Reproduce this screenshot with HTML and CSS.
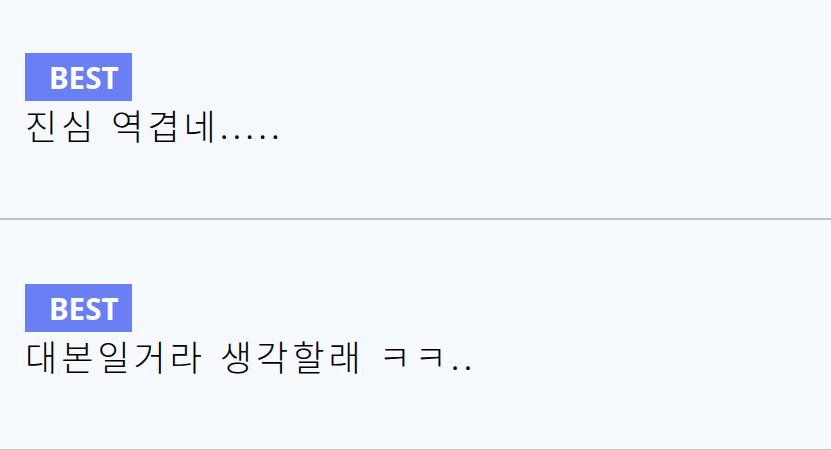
FILE: index.html
```html
<!DOCTYPE html>
<html lang="ko">
<head>
    <meta charset="UTF-8">
    <meta name="viewport" content="width=device-width, initial-scale=1.0">
    <title>베스트 댓글</title>
    <link rel="stylesheet" href="styles.css">
</head>
<body>
    <ul class="comment-list">
        <li class="comment">
            <span class="badge">BEST</span>
            <p class="comment-text">진심 역겹네.....</p>
        </li>
        <li class="comment">
            <span class="badge">BEST</span>
            <p class="comment-text">대본일거라 생각할래 ㅋㅋ..</p>
        </li>
    </ul>
</body>
</html>
```

FILE: styles.css
```css
body {
    margin: 0;
    padding: 0;
    background-color: #f6f9fe;
    font-family: "Noto Sans CJK KR", "Noto Sans", sans-serif;
    overflow: hidden;
}

.comment-list {
    list-style: none;
    margin: -11px 0 0 0;
    padding: 0;
}

.comment {
    display: flex;
    flex-direction: column;
    align-items: flex-start;
    height: 165px;
    padding: 64px 25px 0;
    border-bottom: 2px solid #c2c2c2;
}

.comment:last-child {
    border-bottom-width: 1px;
}

.badge {
    display: flex;
    align-items: center;
    height: 48px;
    padding: 0 14px 0 24px;
    background-color: #6a7ff3;
    color: #fff;
    font-family: "Noto Sans", sans-serif;
    font-weight: bold;
    font-size: 29.5px;
}

.comment-text {
    margin: 0;
    font-size: 35px;
    font-weight: 300;
    letter-spacing: 4px;
    line-height: 48px;
    color: #000;
}
```
